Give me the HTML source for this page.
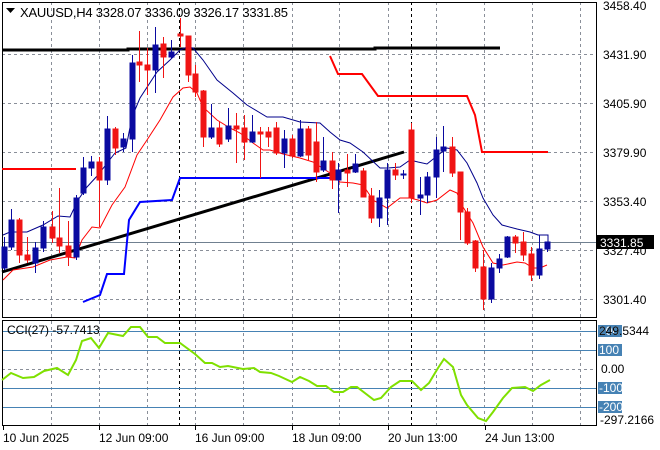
<!DOCTYPE html><html><head><meta charset="utf-8"><style>
body{margin:0;background:#fff;}
svg{display:block;font-family:"Liberation Sans",sans-serif;}
</style></head><body>
<svg width="660" height="450" viewBox="0 0 660 450" xmlns="http://www.w3.org/2000/svg">
<rect width="660" height="450" fill="#fff"/>
<g stroke="#8a8f99" stroke-dasharray="3,3" stroke-width="1">
<path d="M51.5 2V317M99.5 2V317M147.5 2V317M195.5 2V317M243.5 2V317M292.5 2V317M339.5 2V317M388.5 2V317M436.5 2V317M484.5 2V317M532.5 2V317M580.5 2V317"/>
<path d="M2 54.5H596M2 103.5H596M2 152.5H596M2 201.5H596M2 250.5H596M2 299.5H596"/>
<path d="M51.5 321V425M99.5 321V425M147.5 321V425M195.5 321V425M243.5 321V425M292.5 321V425M339.5 321V425M388.5 321V425M436.5 321V425M484.5 321V425M532.5 321V425M580.5 321V425"/>
<path d="M2 369.5H596"/>
</g>
<g stroke="#000" stroke-dasharray="3,3"><path d="M179.5 2V317M411.5 2V317M179.5 321V425M411.5 321V425"/></g>
<path d="M2 242.5H596" stroke="#708090"/>
<path d="M2 331.5H596M2 350.5H596M2 388.5H596M2 407.5H596" stroke="#4682b4"/>
<rect x="2.5" y="2.5" width="594" height="315" fill="none" stroke="#000"/>
<rect x="2.5" y="320.5" width="594" height="105" fill="none" stroke="#000"/>
<polyline fill="none" stroke="#000" stroke-width="3" points="2,50 128,50 128,49 375,49 375,48 500,48"/>
<line x1="2" y1="272" x2="404" y2="152" stroke="#000" stroke-width="3"/>
<polyline fill="none" stroke="#f00" stroke-width="2" points="2,169 76,169"/>
<polyline fill="none" stroke="#f00" stroke-width="2" points="330,56 338,74 362,74 378,96 467,96 475,115 482,152 548,152"/>
<polyline fill="none" stroke="#0000ff" stroke-width="2" points="83,302 100,295 107,274 124,274 129,220 140,202 172,200 180,178 330,178"/>
<polyline fill="none" stroke="#00008b" stroke-width="1" points="3,235 10,232 27,232 43,225 58,216 70,217 78,200 87,187 98,175 108,162 115,153 126,148 132,117 140,98 157,72 170,60 180,50 187,47 193,48 203,60 217,80 233,93 247,105 267,117 283,117 300,122 320,123 330,132 340,140 350,143 363,152 380,168 388,168 400,167 410,160 418,162 427,164 437,156 447,148 457,150 467,163 477,183 483,198 493,215 502,225 517,229 530,232 538,235 548,235 548,242"/>
<polyline fill="none" stroke="#f00" stroke-width="1" points="3,280 13,270 33,267 50,260 67,257 75,258 82,240 92,227 100,228 112,205 125,187 137,155 147,140 160,120 173,97 183,88 190,87 197,93 203,107 217,120 230,128 240,133 253,143 263,150 270,150 283,154 300,158 313,162 330,173 340,182 353,183 363,185 373,200 387,208 400,198 410,198 418,200 427,203 437,200 450,190 457,193 463,207 473,223 483,247 493,263 503,265 517,262 525,263 533,268 540,268 547,265"/>
<g>
<g stroke="#0a0aa0" fill="#0a0aa0">
<path d="M4.5 237V270M11.5 209V250M35.5 242V273M43.5 221V252M76.5 195V260M83.5 157V195M91.5 156V176M107.5 116V185M123.5 133V152M132.5 55V152M155.5 27V93M171.5 40V59M211.5 104V139M228.5 108V142M252.5 115V143M284.5 130V168M300.5 120V157M323.5 137V172M338.5 163V213M355.5 154V173M379.5 190V227M387.5 163V225M403.5 170V179M420.5 177V215M427.5 172V203M436.5 137V198M443.5 126V172M491.5 263V303M499.5 254V273M507.5 236V258M539.5 235V279M547.5 242V252"/>
<rect x="2" y="247" width="5" height="21"/><rect x="9" y="220" width="5" height="27"/><rect x="33" y="248" width="5" height="15"/><rect x="41" y="227" width="5" height="21"/><rect x="74" y="198" width="5" height="59"/><rect x="81" y="168" width="5" height="25"/><rect x="89" y="162" width="5" height="6"/><rect x="105" y="129" width="5" height="51"/><rect x="121" y="139" width="5" height="8"/><rect x="130" y="63" width="5" height="76"/><rect x="153" y="45" width="5" height="25"/><rect x="169" y="52" width="5" height="5"/><rect x="209" y="128" width="5" height="9"/><rect x="226" y="126" width="5" height="13"/><rect x="250" y="132" width="5" height="10"/><rect x="282" y="139" width="5" height="14"/><rect x="298" y="129" width="5" height="27"/><rect x="321" y="161" width="5" height="9"/><rect x="336" y="170" width="5" height="10"/><rect x="353" y="164" width="5" height="8"/><rect x="377" y="198" width="5" height="20"/><rect x="385" y="170" width="5" height="28"/><rect x="401" y="174" width="5" height="1"/><rect x="418" y="195" width="5" height="3"/><rect x="425" y="177" width="5" height="18"/><rect x="434" y="150" width="5" height="27"/><rect x="441" y="147" width="5" height="4"/><rect x="489" y="268" width="5" height="31"/><rect x="497" y="259" width="5" height="9"/><rect x="505" y="237" width="5" height="20"/><rect x="537" y="249" width="5" height="26"/><rect x="545" y="242" width="5" height="7"/>
</g>
<g stroke="#f01414" fill="#f01414">
<path d="M19.5 218V263M27.5 237V263M52.5 211V243M59.5 188V253M68.5 221V266M99.5 157V227M115.5 127V155M139.5 31V82M147.5 48V95M163.5 37V78M180.5 18V47M188.5 36V82M195.5 65V97M203.5 90V147M219.5 122V147M236.5 113V163M244.5 115V160M260.5 127V178M268.5 127V147M276.5 122V155M292.5 135V158M308.5 126V160M316.5 122V182M332.5 152V189M347.5 154V187M363.5 168V197M371.5 188V223M395.5 163V180M411.5 123V203M452.5 137V177M460.5 172V240M467.5 208V245M475.5 240V272M483.5 250V310M515.5 235V253M523.5 232V261M531.5 247V281"/>
<rect x="17" y="220" width="5" height="35"/><rect x="25" y="255" width="5" height="5"/><rect x="50" y="227" width="5" height="11"/><rect x="57" y="238" width="5" height="8"/><rect x="66" y="246" width="5" height="11"/><rect x="97" y="162" width="5" height="18"/><rect x="113" y="129" width="5" height="19"/><rect x="137" y="62" width="5" height="3"/><rect x="145" y="65" width="5" height="5"/><rect x="161" y="44" width="5" height="13"/><rect x="178" y="34" width="5" height="2"/><rect x="186" y="36" width="5" height="39"/><rect x="193" y="74" width="5" height="18"/><rect x="201" y="91" width="5" height="46"/><rect x="217" y="128" width="5" height="16"/><rect x="234" y="126" width="5" height="3"/><rect x="242" y="128" width="5" height="14"/><rect x="258" y="132" width="5" height="2"/><rect x="266" y="132" width="5" height="5"/><rect x="274" y="128" width="5" height="25"/><rect x="290" y="139" width="5" height="17"/><rect x="306" y="129" width="5" height="26"/><rect x="314" y="142" width="5" height="30"/><rect x="330" y="161" width="5" height="19"/><rect x="345" y="170" width="5" height="3"/><rect x="361" y="171" width="5" height="26"/><rect x="369" y="196" width="5" height="22"/><rect x="393" y="170" width="5" height="5"/><rect x="409" y="130" width="5" height="68"/><rect x="450" y="147" width="5" height="26"/><rect x="458" y="172" width="5" height="40"/><rect x="465" y="212" width="5" height="31"/><rect x="473" y="241" width="5" height="27"/><rect x="481" y="267" width="5" height="32"/><rect x="513" y="237" width="5" height="6"/><rect x="521" y="242" width="5" height="13"/><rect x="529" y="254" width="5" height="21"/>
</g>
</g>
<polyline fill="none" stroke="#7fe000" stroke-width="2" points="2,380 11,373 23,378 34,377 44,371 57,368 68,375 76,360 82,341 91,338 99,348 108,333 123,336 131,327 140,327 148,337 157,337 165,343 180,343 195,354 205,363 212,363 220,367 228,366 243,369 254,368 260,372 271,373 279,376 292,382 300,377 309,381 317,386 326,386 334,392 343,392 351,387 357,387 374,400 381,398 391,387 400,381 412,381 421,390 429,383 438,368 444,359 453,367 461,395 467,405 478,418 486,421 493,412 503,398 512,388 525,387 533,391 541,385 550,380"/>
<g font-size="12" fill="#000">
<path d="M6 8h9l-4.5 5z" fill="#000"/>
<text x="20" y="17" font-size="13" textLength="268" lengthAdjust="spacing">XAUUSD,H4  3328.07 3336.09 3326.17 3331.85</text>
<text x="603" y="10">3458.40</text>
<text x="603" y="59">3431.90</text>
<text x="603" y="108">3405.90</text>
<text x="603" y="157">3379.90</text>
<text x="603" y="206">3353.40</text>
<text x="603" y="255">3327.40</text>
<text x="603" y="304">3301.40</text>
<rect x="597" y="235" width="57" height="14" fill="#000"/>
<text x="600" y="247" fill="#fff">3331.85</text>
<text x="7" y="334" font-size="12">CCI(27) -57.7413</text>
<g fill="#4682b4"><rect x="598" y="325" width="24" height="12"/><rect x="598" y="344" width="24" height="12"/><rect x="598" y="382" width="24" height="12"/><rect x="598" y="401" width="24" height="12"/></g>
<g fill="#fff"><text x="599" y="335">200</text><text x="599" y="354">100</text><text x="599" y="392">-100</text><text x="599" y="411">-200</text></g>
<text x="599" y="335">249.5344</text>
<text x="601" y="373">0.00</text>
<text x="600" y="424">-297.2166</text>
<text x="3" y="442">10 Jun 2025</text>
<text x="99" y="442">12 Jun 09:00</text>
<text x="195" y="442">16 Jun 09:00</text>
<text x="292" y="442">18 Jun 09:00</text>
<text x="388" y="442">20 Jun 13:00</text>
<text x="485" y="442">24 Jun 13:00</text>
</g>
<path d="M3.5 426v4M99.5 426v4M195.5 426v4M292.5 426v4M388.5 426v4M485.5 426v4" stroke="#000"/>
</svg>
</body></html>
